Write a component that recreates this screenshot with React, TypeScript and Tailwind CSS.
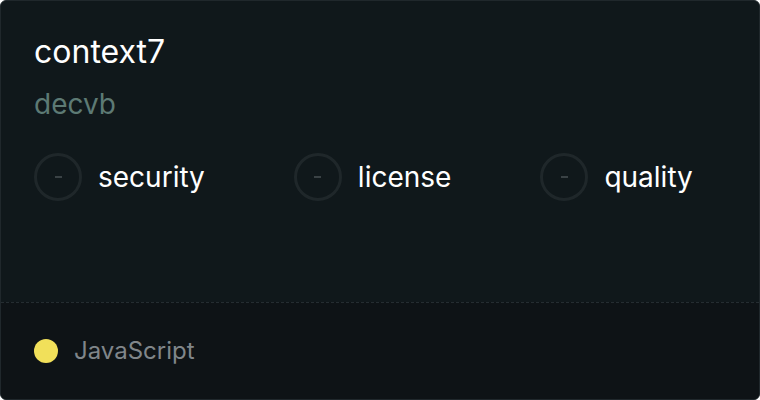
export default function App() {
  const checks = ["security", "license", "quality"];

  return (
    <div className="h-[400px] w-[760px] bg-white" style={{ fontFamily: "Inter, 'Noto Sans', sans-serif" }}>
      <div className="flex h-full w-full flex-col overflow-hidden rounded-[6px] border border-[#20282c] bg-[#10181b]">
        {/* Header */}
        <div className="flex flex-1 flex-col px-[33px] pt-[31px]">
          <div className="text-[32px] leading-[40px] text-white">context7</div>
          <div className="mt-[14px] text-[28px] leading-[36px] text-[#5d7a74]">decvb</div>

          {/* Scores */}
          <div className="mt-[31px] flex items-center gap-[89px]">
            {checks.map((name) => (
              <div key={name} className="flex items-center gap-[16px]">
                <div className="flex h-[48px] w-[48px] items-center justify-center rounded-full border-[3px] border-[#1f272a]">
                  <div className="h-[2px] w-[7px] bg-[#3a4245]" />
                </div>
                <span className="text-[28px] leading-[36px] text-white">{name}</span>
              </div>
            ))}
          </div>
        </div>

        {/* Footer */}
        <div className="flex h-[97px] items-center gap-[16px] border-t border-dashed border-[#252d31] bg-[#0e1316] px-[33px]">
          <div className="h-[24px] w-[24px] rounded-full bg-[#f1e05a]" />
          <span className="text-[24px] leading-[30px] text-[#80868a]">JavaScript</span>
        </div>
      </div>
    </div>
  );
}
